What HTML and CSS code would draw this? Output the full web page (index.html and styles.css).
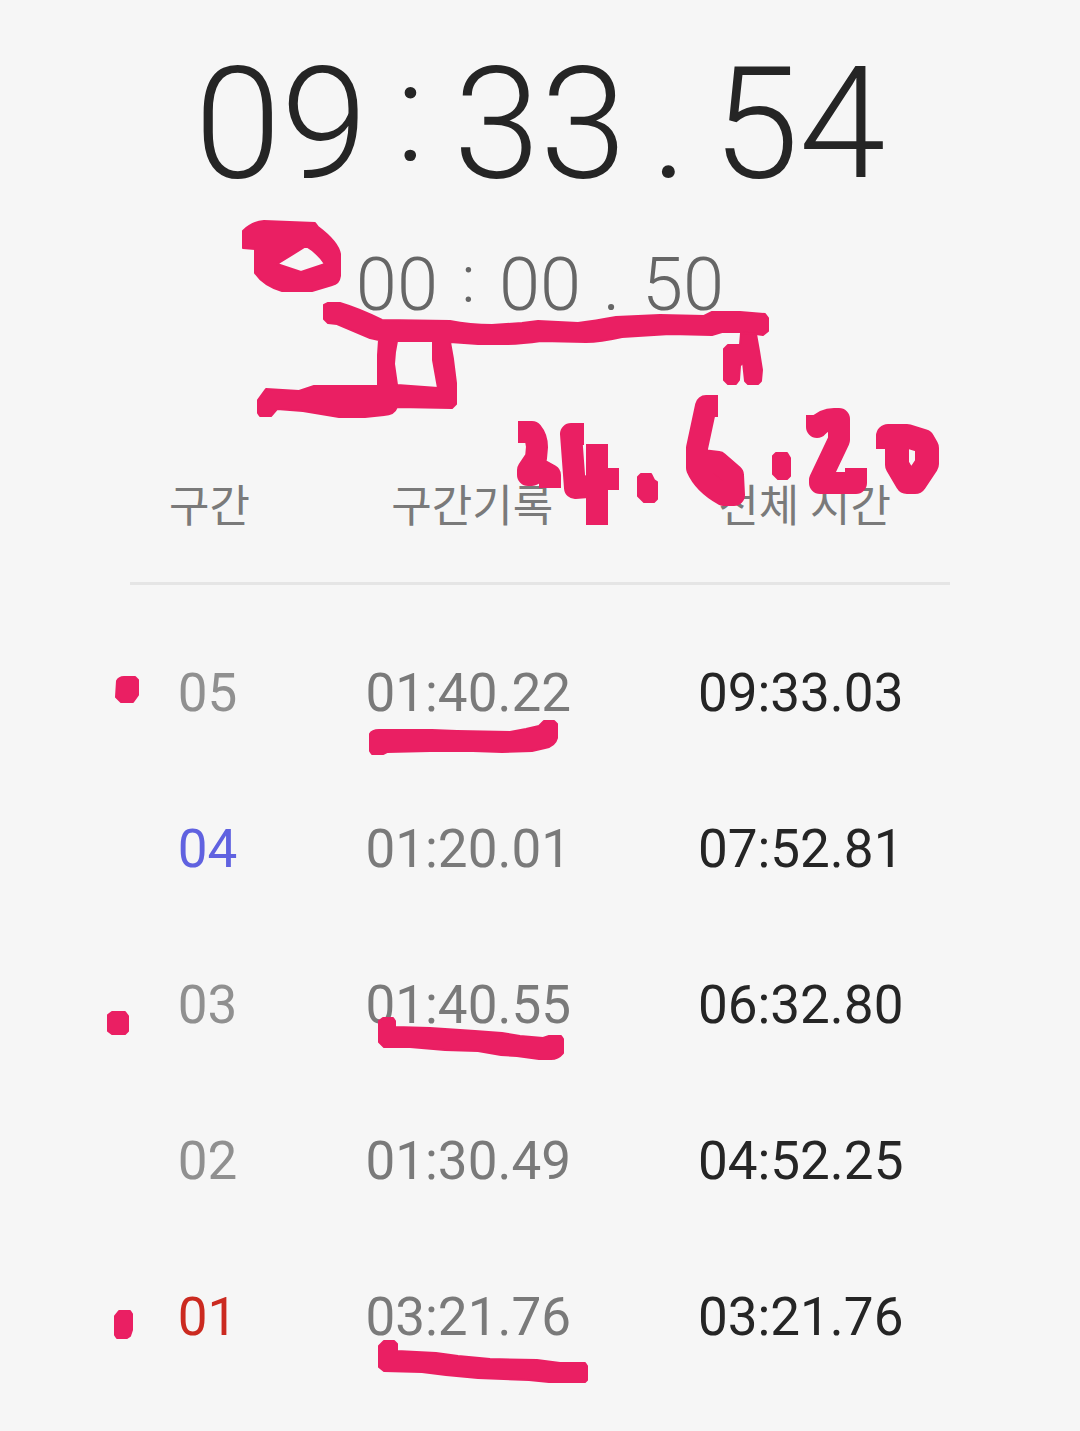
FILE: index.html
```html
<!DOCTYPE html>
<html lang="ko">
<head>
    <meta charset="UTF-8">
    <meta name="viewport" content="width=device-width, initial-scale=1.0">
    <title>스톱워치</title>
    <link rel="stylesheet" href="styles.css">
</head>
<body>
    <main class="stopwatch">
        <div class="time total">
            <span>09</span><span class="sep colon">:</span><span>33</span><span class="sep">.</span><span>54</span>
        </div>
        <div class="time lap">
            <span>00</span><span class="sep colon">:</span><span>00</span><span class="sep">.</span><span>50</span>
        </div>
        <table class="laps">
            <thead>
                <tr>
                    <th class="col-no">구간</th>
                    <th class="col-lap">구간기록</th>
                    <th class="col-total">전체 시간</th>
                </tr>
            </thead>
            <tbody>
                <tr>
                    <td class="no">05</td>
                    <td class="record">01:40.22</td>
                    <td class="elapsed">09:33.03</td>
                </tr>
                <tr>
                    <td class="no fastest">04</td>
                    <td class="record">01:20.01</td>
                    <td class="elapsed">07:52.81</td>
                </tr>
                <tr>
                    <td class="no">03</td>
                    <td class="record">01:40.55</td>
                    <td class="elapsed">06:32.80</td>
                </tr>
                <tr>
                    <td class="no">02</td>
                    <td class="record">01:30.49</td>
                    <td class="elapsed">04:52.25</td>
                </tr>
                <tr>
                    <td class="no slowest">01</td>
                    <td class="record">03:21.76</td>
                    <td class="elapsed">03:21.76</td>
                </tr>
            </tbody>
        </table>

        <!-- pen marks over the screen -->
        <svg class="ink" viewBox="0 0 1080 1431" aria-hidden="true">
            <g class="blot">
                <!-- loop -->
                <path fill-rule="evenodd" d="M243 231 Q252 222 264 221 L315 223 L318 227 Q338 242 340 254 L340 276 Q339 284 332 285 L312 291 L282 291 Q264 286 255 273 L255 249 L243 248 Z M277 264 L301 272 L325 264 Q318 253 306 246 Z"/>
                <!-- long line with the box below it -->
                <path fill-rule="evenodd" d="M324 305 L328 303 L340 303 Q360 309 382 320 L450 321 Q470 325 492 325 L522 323 L538 321 L578 323 Q595 321 616 317 L660 315 L704 316 L712 312 L740 312 L765 314 L768 318 L768 331 L763 335 L741 332 L722 332 L712 335 L670 334 L622 337 Q600 342 586 342 L541 341 Q520 344 504 344 L478 344 L450 342 L453 359 L456 383 L456 404 L452 408 L397 407 Q394 415 384 415 L365 417 L339 417 L303 411 L277 409 L271 416 L260 416 L258 413 L258 400 L266 389 L299 391 L314 386 L378 386 L378 355 L379 340 L370 338 L337 324 L328 323 L324 319 Z M397 341 L395 352 L394 364 L397 385 L438 388 L433 360 L433 341 Z"/>
                <path d="M741 333 L756 334 L759 351 L762 370 L761 381 L758 384 L748 384 L745 381 L743 362 L740 366 L739 380 L736 384 L728 384 L724 380 L724 349 L728 345 L740 345 Z"/>
                <!-- dots in the date -->
                <path d="M638 477 L641 474 L651 474 L654 480 L657 482 L657 499 L654 502 L644 502 L638 496 Z"/>
                <path d="M773 456 L776 453 L787 453 L790 458 L790 476 L787 479 L778 479 L773 474 Z"/>
                <!-- lap marks -->
                <path d="M117 681 Q119 677 124 677 L135 677 L138 680 L138 695 L133 702 L121 702 L116 697 Z"/>
                <path d="M108 1015 L112 1012 L125 1012 L128 1016 L128 1031 L125 1034 L112 1034 L108 1031 Z"/>
                <path d="M115 1316 L119 1311 L130 1311 L132 1314 L132 1330 L130 1336 L127 1338 L117 1338 L115 1335 Z"/>
                <!-- lap underlines -->
                <path d="M370 734 Q372 730 379 730 L432 730 L457 731 L510 732 L526 729 L539 726 L544 721 L554 721 L557 724 L557 738 Q555 746 545 748 L532 751 L502 752 L473 751 L430 751 L387 752 L383 754 L372 754 L370 751 Z"/>
                <path d="M379 1021 L383 1018 L393 1018 L395 1021 L395 1027 L430 1028 L475 1031 L502 1033 L520 1036 L543 1038 L549 1036 L561 1036 L563 1039 L563 1053 Q558 1059 551 1059 L539 1059 L517 1056 L501 1055 L478 1051 L445 1050 L410 1047 L384 1047 L379 1042 Z"/>
                <path d="M379 1346 L384 1341 L394 1341 L397 1344 L397 1351 L436 1353 L458 1356 L490 1359 L537 1360 L560 1363 L585 1363 L587 1366 L587 1380 L585 1382 L549 1382 L529 1380 L478 1378 L446 1375 L422 1372 L384 1371 L379 1367 Z"/>
            </g>
            <!-- date -->
            <g class="pen">
                <path d="M529 432 H532 Q537 438 537 447 L536 458 L528 470 V475 H532 L541 470 L550 475 V477"/>
                <path d="M573 434 H571 L575 488 L588 487 L600 479 H608 M597 455 V514"/>
                <path class="solid" d="M707 406 H706 L697 448 L697 468 Q704 484 724 495 H734 L733 475 L718 462 L702 460"/>
                <path d="M817 426 V427 Q824 419 834 419 H839 V440 L820 480 V483 H856 V479"/>
                <path class="heavy" d="M888 437 V436 H907 L923 441 L927 448 V464 L915 482 H907 L897 465 V446"/>
            </g>
        </svg>
    </main>
</body>
</html>
```
FILE: styles.css
```css
* {
    margin: 0;
    padding: 0;
    box-sizing: border-box;
}
body {
    background-color: #f6f6f6;
    color: #252525;
    font-family: Roboto, "Noto Sans CJK KR", sans-serif;
}
.stopwatch {
    position: relative;
    padding: 33px 12% 35px;
}
.time {
    display: flex;
    justify-content: center;
    font-weight: 300;
}
.sep {
    text-align: center;
}
.total {
    font-size: 156px;
    line-height: 182px;
}
.total .sep {
    width: 86px;
}
.total .colon {
    margin-top: -12px;
    font-size: 140px;
}
.lap {
    margin-top: 26px;
    color: #666;
    font-size: 74px;
    line-height: 88px;
}
.lap .sep {
    width: 61px;
}
.lap .colon {
    margin-top: -5px;
    font-size: 66px;
}
.laps {
    width: 100%;
    margin-top: 99px;
    table-layout: fixed;
    border-collapse: separate;
    border-spacing: 0;
    text-align: center;
}
.laps th {
    height: 157px;
    padding: 4px 0 0 4px;
    border-bottom: 3px solid #e5e5e5;
    color: #7a7a7a;
    font-size: 44px;
    font-weight: 400;
    line-height: 60px;
}
.laps tbody::before {
    content: "";
    display: table-row;
    height: 30px;
}
.col-no {
    width: 19%;
}
.col-lap {
    width: 45%;
}
.laps td {
    height: 156px;
    font-size: 53px;
    line-height: 62px;
}
.laps .no {
    color: #909090;
}
.laps .record {
    padding-right: 4px;
    color: #7a7a7a;
}
.laps .elapsed {
    padding-right: 4px;
}
.laps .fastest {
    color: #6062e0;
}
.laps .slowest {
    color: #cb2a20;
}
.ink {
    position: absolute;
    top: 0;
    left: 0;
    width: 100%;
}
.blot {
    fill: #ea1f63;
    stroke: #ea1f63;
    stroke-width: 2;
    stroke-linejoin: round;
}
.pen {
    fill: none;
    stroke: #ea1f63;
    stroke-width: 22;
    stroke-linecap: square;
    stroke-linejoin: round;
}
.pen .heavy {
    stroke-width: 24;
}
.pen .solid {
    fill: #ea1f63;
}
```
